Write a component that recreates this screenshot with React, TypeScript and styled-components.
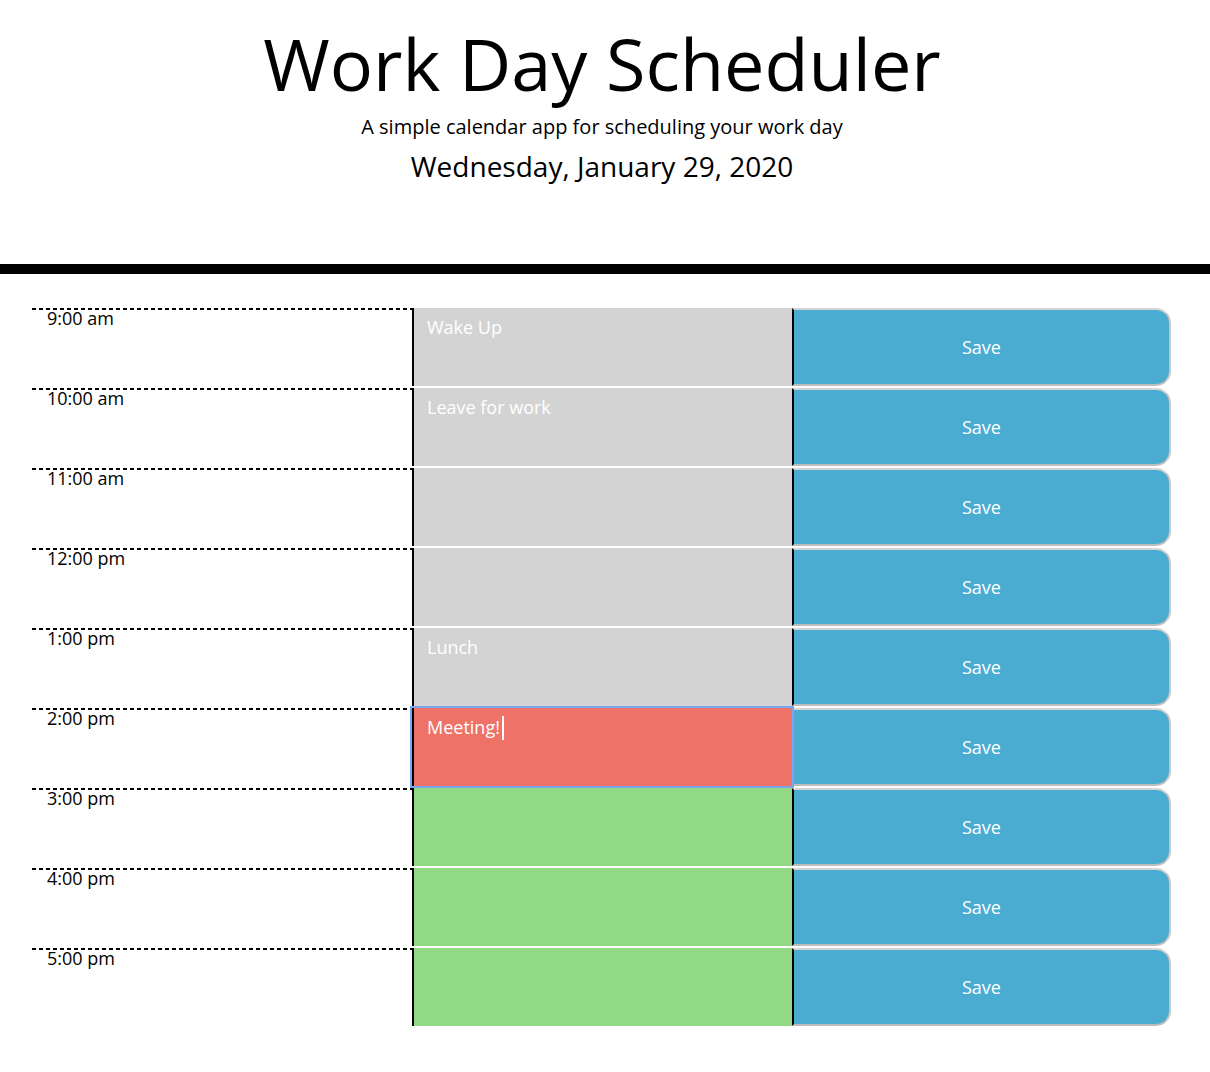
import React from "react";
import styled, { createGlobalStyle } from "styled-components";

const GlobalStyle = createGlobalStyle`
  html, body { margin: 0; padding: 0; background: #ffffff; }
  body {
    font-family: "Open Sans", "Liberation Sans", sans-serif;
    line-height: 1;
    color: #000;
  }
  * { box-sizing: border-box; }
`;

const Page = styled.div`
  width: 1210px;
  min-height: 1072px;
  background: #fff;
`;

const Jumbotron = styled.header`
  display: flex;
  flex-direction: column;
  align-items: center;
  padding: 27px 6px 0 0;
  height: 274px;
  border-bottom: 10px solid #000;
`;

const Title = styled.h1`
  margin: 0;
  font-size: 72px;
  font-weight: 400;
  line-height: 1;
`;

const Lead = styled.p`
  margin: 18px 0 0;
  font-size: 20px;
  font-weight: 400;
  line-height: 1;
`;

const CurrentDay = styled.p`
  margin: 15px 0 0;
  font-size: 28px;
  font-weight: 400;
  line-height: 1;
`;

const Container = styled.main`
  padding: 34px 0 0 32px;
`;

const Row = styled.div`
  display: grid;
  grid-template-columns: 380px 380px 379px;
  height: 80px;
`;

const Hour = styled.div`
  padding: 1px 0 0 15px;
  font-size: 18px;
  line-height: 1;
  background-color: #fff;
  background-image: repeating-linear-gradient(
    to right,
    #000 0 4px,
    transparent 4px 7px
  );
  background-repeat: no-repeat;
  background-size: 100% 2px;
  background-position: 0 0;
`;

type Status = "past" | "present" | "future";

const statusColor: Record<Status, string> = {
  past: "#d3d3d3",
  present: "#ee7268",
  future: "#92d985",
};

const Description = styled.div<{ $status: Status; $focused?: boolean }>`
  height: 78px;
  border-left: 2px solid #000;
  background: ${(p) => statusColor[p.$status]};
  color: #fff;
  font-size: 18px;
  line-height: 24px;
  padding: 7px 13px;
  white-space: pre-wrap;
  outline: ${(p) => (p.$focused ? "2px solid #7aa6ee" : "none")};
  outline-offset: 0px;
  position: relative;
  z-index: ${(p) => (p.$focused ? 1 : 0)};
`;

const Caret = styled.span`
  display: inline-block;
  width: 2px;
  height: 24px;
  margin-left: 2px;
  background: #fff;
  vertical-align: -6px;
`;

const SaveBtn = styled.button`
  height: 78px;
  border: 2px solid #d4d4d4;
  border-bottom-color: #bdbdbd;
  border-right-color: #c8c8c8;
  border-left: 2px solid #000;
  border-top-right-radius: 15px;
  border-bottom-right-radius: 15px;
  background: #4bacd2;
  color: #fff;
  font-family: "Open Sans", "Liberation Sans", sans-serif;
  font-size: 18px;
  line-height: 1;
  padding: 0;
  cursor: pointer;
`;

const rows: { hour: string; text: string; status: Status; focused?: boolean }[] = [
  { hour: "9:00 am", text: "Wake Up", status: "past" },
  { hour: "10:00 am", text: "Leave for work", status: "past" },
  { hour: "11:00 am", text: "", status: "past" },
  { hour: "12:00 pm", text: "", status: "past" },
  { hour: "1:00 pm", text: "Lunch", status: "past" },
  { hour: "2:00 pm", text: "Meeting!", status: "present", focused: true },
  { hour: "3:00 pm", text: "", status: "future" },
  { hour: "4:00 pm", text: "", status: "future" },
  { hour: "5:00 pm", text: "", status: "future" },
];

export default function App() {
  return (
    <Page>
      <GlobalStyle />
      <Jumbotron>
        <Title>Work Day Scheduler</Title>
        <Lead>A simple calendar app for scheduling your work day</Lead>
        <CurrentDay>Wednesday, January 29, 2020</CurrentDay>
      </Jumbotron>
      <Container>
        {rows.map((r) => (
          <Row key={r.hour}>
            <Hour>{r.hour}</Hour>
            <Description $status={r.status} $focused={r.focused}>
              {r.text}
              {r.focused && <Caret />}
            </Description>
            <SaveBtn>Save</SaveBtn>
          </Row>
        ))}
      </Container>
    </Page>
  );
}
